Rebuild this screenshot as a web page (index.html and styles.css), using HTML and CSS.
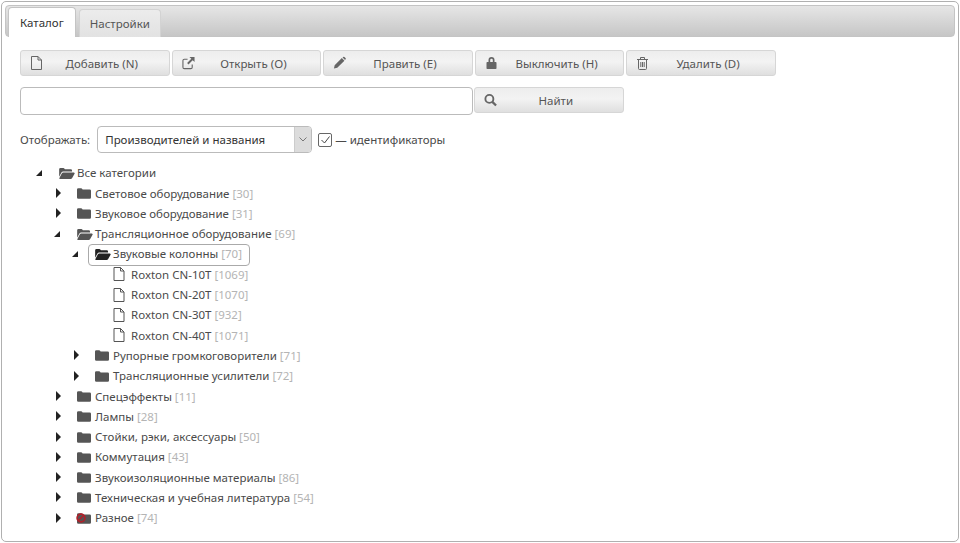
FILE: index.html
```html
<!DOCTYPE html>
<html lang="ru">
<head>
    <meta charset="UTF-8" />
    <title>Каталог</title>
    <link rel="stylesheet" href="styles.css">
</head>
<body>
<svg class="sprite" width="0" height="0">
    <symbol id="i-file" viewBox="0 0 12 14"><path d="M1 .5h6.500L11 4v9.500H1zM7.500.5V4H11" fill="none" stroke="currentColor" stroke-width="1"/></symbol>
    <symbol id="i-link" viewBox="0 0 14 14"><path d="M6 3H2.500A1.500 1.500 0 0 0 1 4.500v7A1.500 1.500 0 0 0 2.500 13h7a1.500 1.500 0 0 0 1.500-1.500V8.500" fill="none" stroke="currentColor" stroke-width="1.200"/><path d="M8 .5h5.500V6l-2-2-4.500 4.500-1.500-1.500L10 2.500z" fill="currentColor"/></symbol>
    <symbol id="i-pencil" viewBox="0 0 14 14"><path d="M1 13l.8-3.600L9.500 1.700l2.800 2.800-7.700 7.700zM10.300 1l.7-.5a1 1 0 0 1 1.300 0l1.200 1.200a1 1 0 0 1 0 1.300l-.5.700z" fill="currentColor"/></symbol>
    <symbol id="i-lock" viewBox="0 0 12 14"><path d="M3 6V4a3 3 0 0 1 6 0v2h1.200a.8.8 0 0 1 .8.8v5.400a.8.8 0 0 1-.8.8H1.800a.8.8 0 0 1-.8-.8V6.800a.8.8 0 0 1 .8-.8zm1.700 0h2.600V4a1.300 1.300 0 0 0-2.600 0z" fill="currentColor"/></symbol>
    <symbol id="i-trash" viewBox="0 0 12 14"><path d="M.5 3.500h11M4 3.500V1.500h4v2M2 3.500v9a1 1 0 0 0 1 1h6a1 1 0 0 0 1-1v-9M4.300 6v5M6 6v5M7.700 6v5" fill="none" stroke="currentColor" stroke-width="1"/></symbol>
    <symbol id="i-search" viewBox="0 0 14 14"><circle cx="5.800" cy="5.800" r="4.300" fill="none" stroke="currentColor" stroke-width="2"/><path d="M9 9l4 4" stroke="currentColor" stroke-width="2.400"/></symbol>
    <symbol id="i-folder" viewBox="0 0 16 13"><path d="M0 2.500A1.500 1.500 0 0 1 1.500 1h3.200a1.500 1.500 0 0 1 1.300.8l.4.7h8.100A1.500 1.500 0 0 1 16 4v7.500a1.500 1.500 0 0 1-1.500 1.500h-13A1.500 1.500 0 0 1 0 11.500z" fill="currentColor"/></symbol>
    <symbol id="i-open" viewBox="0 0 17 13"><path d="M0 2.500A1.500 1.500 0 0 1 1.500 1h3a1.500 1.500 0 0 1 1.300.8l.4.7h6.300A1.500 1.500 0 0 1 14 4v1H4.500a2.500 2.500 0 0 0-2.200 1.300L0 10.500z" fill="currentColor"/><path d="M4.500 6H16a.8.8 0 0 1 .7 1.200l-2.600 4.800a2 2 0 0 1-1.700 1H1a.8.8 0 0 1-.7-1.200l2.500-4.800A2 2 0 0 1 4.500 6z" fill="currentColor"/></symbol>
</svg>

<div class="panel">
    <div class="tabs">
        <div class="tab active">Каталог</div>
        <div class="tab">Настройки</div>
    </div>

    <div class="content">
        <div class="toolbar">
            <button class="btn"><svg class="btn-icon"><use href="#i-file"/></svg>Добавить (N)</button>
            <button class="btn"><svg class="btn-icon"><use href="#i-link"/></svg>Открыть (O)</button>
            <button class="btn"><svg class="btn-icon"><use href="#i-pencil"/></svg>Править (E)</button>
            <button class="btn"><svg class="btn-icon"><use href="#i-lock"/></svg>Выключить (H)</button>
            <button class="btn"><svg class="btn-icon"><use href="#i-trash"/></svg>Удалить (D)</button>
        </div>

        <div class="search">
            <input type="text" class="search-input">
            <button class="btn"><svg class="btn-icon"><use href="#i-search"/></svg>Найти</button>
        </div>

        <div class="display">
            <span>Отображать:</span>
            <div class="select">
                <span class="select-value">Производителей и названия</span>
                <span class="select-arrow"><svg width="8" height="5" viewBox="0 0 8 5"><path d="M.5.5L4 4 7.500.5" fill="none" stroke="#777"/></svg></span>
            </div>
            <span class="check"><svg width="9" height="8" viewBox="0 0 9 8"><path d="M.5 4l3 3L8.500.5" fill="none" stroke="#444"/></svg></span>
            <span>— идентификаторы</span>
        </div>

        <ul class="tree">
            <li>
                <div class="node"><i class="toggle open"></i><svg class="icon open-icon"><use href="#i-open"/></svg><span>Все категории</span></div>
                <ul>
                    <li><div class="node"><i class="toggle"></i><svg class="icon"><use href="#i-folder"/></svg><span>Световое оборудование <em>[30]</em></span></div></li>
                    <li><div class="node"><i class="toggle"></i><svg class="icon"><use href="#i-folder"/></svg><span>Звуковое оборудование <em>[31]</em></span></div></li>
                    <li>
                        <div class="node"><i class="toggle open"></i><svg class="icon open-icon"><use href="#i-open"/></svg><span>Трансляционное оборудование <em>[69]</em></span></div>
                        <ul>
                            <li>
                                <div class="node selected"><i class="toggle open"></i><svg class="icon open-icon dark"><use href="#i-open"/></svg><span>Звуковые колонны <em>[70]</em></span></div>
                                <ul>
                                    <li><div class="node"><i class="toggle none"></i><svg class="icon file"><use href="#i-file"/></svg><span>Roxton CN-10T <em>[1069]</em></span></div></li>
                                    <li><div class="node"><i class="toggle none"></i><svg class="icon file"><use href="#i-file"/></svg><span>Roxton CN-20T <em>[1070]</em></span></div></li>
                                    <li><div class="node"><i class="toggle none"></i><svg class="icon file"><use href="#i-file"/></svg><span>Roxton CN-30T <em>[932]</em></span></div></li>
                                    <li><div class="node"><i class="toggle none"></i><svg class="icon file"><use href="#i-file"/></svg><span>Roxton CN-40T <em>[1071]</em></span></div></li>
                                </ul>
                            </li>
                            <li><div class="node"><i class="toggle"></i><svg class="icon"><use href="#i-folder"/></svg><span>Рупорные громкоговорители <em>[71]</em></span></div></li>
                            <li><div class="node"><i class="toggle"></i><svg class="icon"><use href="#i-folder"/></svg><span>Трансляционные усилители <em>[72]</em></span></div></li>
                        </ul>
                    </li>
                    <li><div class="node"><i class="toggle"></i><svg class="icon"><use href="#i-folder"/></svg><span>Спецэффекты <em>[11]</em></span></div></li>
                    <li><div class="node"><i class="toggle"></i><svg class="icon"><use href="#i-folder"/></svg><span>Лампы <em>[28]</em></span></div></li>
                    <li><div class="node"><i class="toggle"></i><svg class="icon"><use href="#i-folder"/></svg><span>Стойки, рэки, аксессуары <em>[50]</em></span></div></li>
                    <li><div class="node"><i class="toggle"></i><svg class="icon"><use href="#i-folder"/></svg><span>Коммутация <em>[43]</em></span></div></li>
                    <li><div class="node"><i class="toggle"></i><svg class="icon"><use href="#i-folder"/></svg><span>Звукоизоляционные материалы <em>[86]</em></span></div></li>
                    <li><div class="node"><i class="toggle"></i><svg class="icon"><use href="#i-folder"/></svg><span>Техническая и учебная литература <em>[54]</em></span></div></li>
                    <li>
                        <div class="node">
                            <i class="toggle"></i>
                            <span class="icon-wrap">
                                <svg class="icon"><use href="#i-folder"/></svg>
                                <svg class="ban" viewBox="0 0 10 10"><circle cx="5" cy="5" r="3.900" fill="none" stroke="#b0202a" stroke-width="1.700"/><path d="M2.300 7.700l5.400-5.400" stroke="#b0202a" stroke-width="1.500"/></svg>
                            </span>
                            <span>Разное <em>[74]</em></span>
                        </div>
                    </li>
                </ul>
            </li>
        </ul>
    </div>
</div>
</body>
</html>
```

FILE: styles.css
```css
* {
    box-sizing: border-box;
}
html, body {
    height: 100%;
}
body {
    margin: 0;
    padding: 1px;
    background-color: #fff;
    font-family: "Noto Sans", sans-serif;
    font-size: 11.5px;
    color: #4a4a4a;
}
.sprite {
    display: block;
    height: 0;
}
.panel {
    height: 541px;
    padding: 3px;
    border: 1px solid #b0b0b0;
    border-radius: 5px;
    background-color: #fff;
}
.tabs {
    display: flex;
    align-items: flex-end;
    gap: 3px;
    height: 32px;
    padding-left: 2px;
    border: 1px solid #c4c4c4;
    border-radius: 4px;
    background: linear-gradient(#e6e6e6, #c6c6c6);
}
.tab {
    height: 28px;
    padding: 6px 10px 0;
    margin-bottom: -1px;
    border: 1px solid #d3d3d3;
    border-bottom: none;
    border-radius: 4px 4px 0 0;
    background: linear-gradient(#ececec, #e2e2e2);
    color: #555;
}
.tab.active {
    height: 30px;
    padding: 7px 11px 0;
    background: #fff;
    border-color: #c4c4c4;
    color: #333;
}
.content {
    padding: 13px 15px 0;
}
.toolbar {
    display: flex;
    gap: 2px;
}
.btn {
    position: relative;
    width: 149.6px;
    height: 26px;
    padding: 0 0 0 14px;
    border: 1px solid #d6d6d6;
    border-radius: 3px;
    background: linear-gradient(#ededed 0%, #f3f3f3 45%, #dfdfdf 100%);
    font-family: inherit;
    font-size: 11.5px;
    color: #555;
}
.btn-icon {
    position: absolute;
    left: 9px;
    top: 5px;
    width: 13px;
    height: 14px;
    color: #666;
}
.search {
    display: flex;
    gap: 1px;
    margin-top: 11px;
    align-items: flex-start;
}
.search-input {
    width: 453px;
    height: 28px;
    border: 1px solid #bbb;
    border-radius: 4px;
}
.display {
    display: flex;
    align-items: center;
    margin-top: 11px;
    height: 27px;
}
.select {
    display: flex;
    width: 215px;
    height: 27px;
    margin-left: 7px;
    border: 1px solid #bbb;
    border-radius: 4px;
    overflow: hidden;
}
.select-value {
    flex: 1;
    padding: 5px 7px;
    color: #333;
}
.select-arrow {
    display: flex;
    align-items: center;
    justify-content: center;
    width: 17px;
    background: #dcdcdc;
    border-left: 1px solid #ccc;
}
.check {
    display: flex;
    align-items: center;
    justify-content: center;
    width: 14px;
    height: 14px;
    margin: 0 3px 0 6px;
    border: 1px solid #666;
    border-radius: 2px;
}
.tree, .tree ul {
    list-style: none;
    margin: 0;
    padding: 0;
}
.tree {
    margin-top: 9.6px;
    padding-left: 15px;
}
.tree ul {
    padding-left: 18px;
}
.node {
    display: flex;
    align-items: center;
    height: 20.3px;
    white-space: nowrap;
}
.node em {
    font-style: normal;
    color: #b4b4b4;
}
.node.selected {
    position: relative;
}
.node.selected::before {
    content: "";
    position: absolute;
    left: 17px;
    top: 0;
    width: 160px;
    height: 20px;
    border: 1px solid #aaa;
    border-radius: 4px;
}
.toggle {
    flex: none;
    width: 24px;
    height: 10px;
    position: relative;
}
.toggle::before {
    content: "";
    position: absolute;
    left: 3px;
    top: 0;
    border-left: 5px solid #222;
    border-top: 5px solid transparent;
    border-bottom: 5px solid transparent;
}
.toggle.open::before {
    left: 1px;
    top: 2px;
    border: none;
    border-right: 6px solid #222;
    border-top: 6px solid transparent;
}
.toggle.none::before {
    display: none;
}
.icon {
    flex: none;
    width: 14px;
    height: 12px;
    margin-right: 4px;
    color: #555;
}
.icon.open-icon {
    width: 16px;
    margin-right: 2px;
}
.icon.dark {
    color: #222;
}
.icon.file {
    width: 12px;
    height: 14px;
    margin-right: 6px;
}
.icon-wrap {
    position: relative;
    display: flex;
    flex: none;
}
.ban {
    position: absolute;
    left: -1px;
    top: 1px;
    width: 10px;
    height: 10px;
}
```
